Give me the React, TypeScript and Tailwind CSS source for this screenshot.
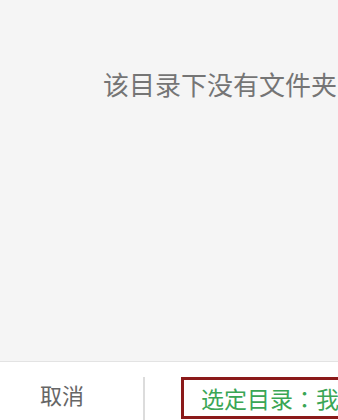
export default function App() {
  const font = { fontFamily: '"Noto Sans CJK SC", "Noto Sans", sans-serif' }
  return (
    <div className="w-[338px] h-[420px] overflow-hidden flex flex-col bg-white" style={font}>
      <div className="h-[361px] flex-shrink-0 bg-[#f5f5f5] w-[440px] pt-[68px]">
        <p className="text-center text-[26px] leading-[32px] text-[#757575]">该目录下没有文件夹</p>
      </div>
      <div className="flex-1 border-t border-[#e3e3e3] flex items-end whitespace-nowrap">
        <div className="w-[143px] flex-shrink-0 h-full flex items-center pl-[40px] pt-[5px]">
          <span className="text-[22px] leading-[28px] text-[#666666]">取消</span>
        </div>
        <div className="w-[2px] flex-shrink-0 h-[43px] bg-[#dcdcdc]" />
        <div className="ml-[36px] flex-shrink-0 h-[42px] mb-[1px] border-[3px] border-[#8b1a1a] pl-[17px] w-[300px] flex items-center">
          <span className="text-[23px] leading-[28px] text-[#3aa655]">
            选定目录<span style={{ fontFamily: '"Noto Sans CJK TC", sans-serif' }}>：</span>我的文件夹
          </span>
        </div>
      </div>
    </div>
  )
}
